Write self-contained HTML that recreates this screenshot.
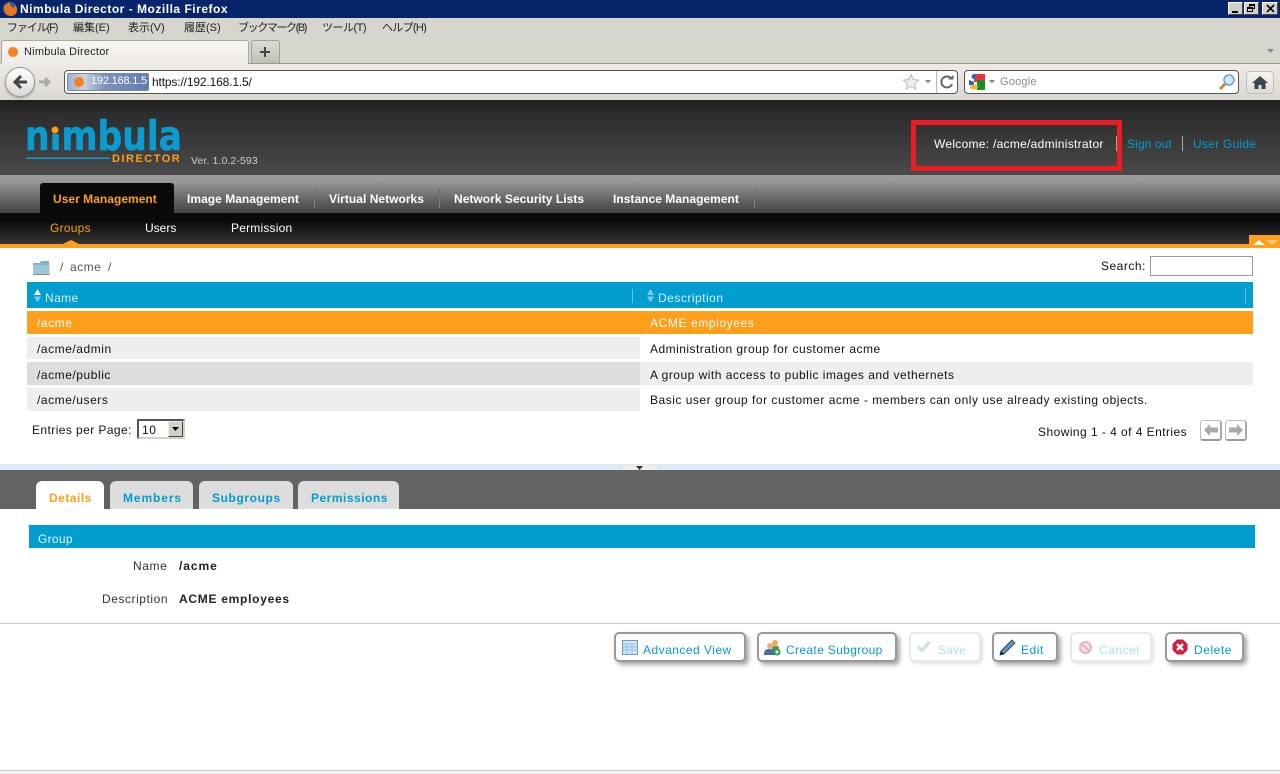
<!DOCTYPE html>
<html><head><meta charset="utf-8"><title>Nimbula Director</title>
<style>
html,body{margin:0;padding:0;width:1280px;height:774px;overflow:hidden;background:#fff}
body{position:relative;font:12px "Liberation Sans","Noto Sans CJK JP",sans-serif;color:#111}
.a,.t{position:absolute}
.t{white-space:nowrap;letter-spacing:.5px;line-height:14px}
.m{top:21px;font-size:11px;color:#222}
.btn{position:absolute;top:632px;height:26px;background:#fff;border:2px solid #999;border-radius:5px;box-shadow:3px 3px 4px #aaa;box-sizing:content-box}
.btn.off{border-color:#e8e8e8;box-shadow:2px 2px 3px #e4e4e4}
.nav{font-weight:bold;color:#fff;letter-spacing:.03px;top:192px}
.sep{position:absolute;top:189px;width:1px;height:19px;background:linear-gradient(#666,#888)}
.tab{position:absolute;top:481px;height:28px;background:#ddd;border-radius:6px 6px 0 0}
.tabt{font-weight:bold;color:#009dcf;top:491px}
.link{color:#009dcf}
</style></head><body>

<!-- window chrome -->
<div class="a" style="left:0;top:0;width:1280px;height:18px;background:#08246b"></div>
<svg class="a" style="left:2px;top:1px" width="16" height="16" viewBox="0 0 16 16"><circle cx="8" cy="8" r="7" fill="#3a5a9a"/><path d="M2 5C1 10 4 15 9 15c4 0 6-3 6-6 0-2-1-4-2-5 0 2-1 3-3 2C8 5 9 3 7 1 6 3 3 3 2 5z" fill="#e8761a"/></svg>
<div class="t" style="left:20px;top:2px;color:#fff;font-weight:bold;font-size:12px;letter-spacing:.51px">Nimbula Director - Mozilla Firefox</div>
<div class="a" style="left:1228px;top:2px;width:15px;height:13px;background:#d4d0c8;border:1px solid;border-color:#fff #444 #444 #fff;box-sizing:border-box"><div class="a" style="left:3px;top:8px;width:6px;height:2px;background:#000"></div></div>
<div class="a" style="left:1244px;top:2px;width:15px;height:13px;background:#d4d0c8;border:1px solid;border-color:#fff #444 #444 #fff;box-sizing:border-box"><div class="a" style="left:4px;top:1px;width:6px;height:5px;border:1px solid #000;border-top-width:2px;box-sizing:border-box"></div><div class="a" style="left:2px;top:4px;width:6px;height:5px;border:1px solid #000;border-top-width:2px;box-sizing:border-box;background:#d4d0c8"></div></div>
<div class="a" style="left:1262px;top:2px;width:16px;height:13px;background:#d4d0c8;border:1px solid;border-color:#fff #444 #444 #fff;box-sizing:border-box"><svg class="a" style="left:3px;top:1px" width="9" height="9"><path d="M1 1l7 7M8 1L1 8" stroke="#000" stroke-width="1.6"/></svg></div>

<div class="a" style="left:0;top:18px;width:1280px;height:46px;background:#d6d5ce"></div>
<div class="t m" style="left:7px;letter-spacing:-1.1px">ファイル(F)</div>
<div class="t m" style="left:73px;letter-spacing:0">編集(E)</div>
<div class="t m" style="left:128px;letter-spacing:0">表示(V)</div>
<div class="t m" style="left:184px;letter-spacing:0">履歴(S)</div>
<div class="t m" style="left:238px;letter-spacing:-1.4px">ブックマーク(B)</div>
<div class="t m" style="left:322px;letter-spacing:-.5px">ツール(T)</div>
<div class="t m" style="left:382px;letter-spacing:-.7px">ヘルプ(H)</div>

<div class="a" style="left:1px;top:40px;width:248px;height:25px;background:linear-gradient(#f7f5f2,#eeebe7);border:1px solid #a8a89c;border-bottom:0;border-radius:3px 3px 0 0;box-sizing:border-box"></div>
<div class="a" style="left:8px;top:47px;width:10px;height:10px;border-radius:50%;background:#f58220"></div>
<div class="t" style="left:24px;top:45px;font-size:11px;letter-spacing:.22px;color:#222">Nimbula Director</div>
<div class="a" style="left:251px;top:40px;width:29px;height:24px;background:linear-gradient(#dcdbd4,#bfbeb6);border:1px solid #a0a094;border-bottom:0;border-radius:3px 3px 0 0;box-sizing:border-box"></div>
<svg class="a" style="left:259px;top:46px" width="12" height="12"><path d="M6 1v10M1 6h10" stroke="#444" stroke-width="2"/></svg>
<svg class="a" style="left:1267px;top:49px" width="8" height="5"><path d="M0 0h7L3.500 4z" fill="#888"/></svg>

<div class="a" style="left:0;top:63px;width:1280px;height:1px;background:#9a9a88"></div>
<div class="a" style="left:1px;top:63px;width:247px;height:1px;background:#eeebe7"></div>
<div class="a" style="left:0;top:64px;width:1280px;height:36px;background:linear-gradient(#eeebe7,#dbd8d1)"></div>

<!-- back/forward -->
<svg class="a" style="left:36px;top:72px" width="20" height="20"><path d="M3 10h10M9 6l4 4-4 4" fill="none" stroke="#a9a9a9" stroke-width="3"/></svg>
<div class="a" style="left:5px;top:67px;width:30px;height:30px;background:linear-gradient(#fff,#dcdad6);border:1px solid #9b9b96;border-radius:50%;box-sizing:border-box;box-shadow:0 1px 2px #999"></div>
<svg class="a" style="left:10px;top:72px" width="20" height="20"><path d="M17 10H5M11 4l-6 6 6 6" fill="none" stroke="#444" stroke-width="3"/></svg>

<!-- URL bar -->
<div class="a" style="left:64px;top:70px;width:894px;height:24px;background:#fff;border:1px solid #555;border-radius:4px;box-sizing:border-box"></div>
<div class="a" style="left:67px;top:73px;width:82px;height:18px;background:linear-gradient(90deg,#9eb0d4,#c8d2e6 20%,#7e93bd 45%,#5f7cae);border:1px solid #7788aa;border-radius:2px;box-sizing:border-box"></div>
<div class="a" style="left:74px;top:77px;width:10px;height:10px;border-radius:50%;background:#f58220"></div>
<div class="t" style="left:91px;top:74px;font-size:11px;letter-spacing:-.2px;color:#fff">192.168.1.5</div>
<div class="t" style="left:152px;top:75px;font-size:12px;letter-spacing:-.15px;color:#111">https://192.168.1.5/</div>
<svg class="a" style="left:902px;top:73px" width="18" height="18"><path d="M9 1.500l2.300 5 5.400.6-4 3.700 1.100 5.400L9 13.500l-4.800 2.700 1.100-5.400-4-3.700 5.400-.6z" fill="#eee" stroke="#bbb"/></svg>
<svg class="a" style="left:925px;top:80px" width="7" height="4"><path d="M0 0h6L3 3.500z" fill="#888"/></svg>
<div class="a" style="left:936px;top:71px;width:1px;height:22px;background:#bbb"></div>
<svg class="a" style="left:939px;top:74px" width="16" height="16"><path d="M12.500 5A5.500 5.500 0 1 0 13 10" fill="none" stroke="#666" stroke-width="2"/><path d="M9 5.500h5.500V1z" fill="#666"/></svg>

<!-- search -->
<div class="a" style="left:964px;top:70px;width:275px;height:24px;background:#fff;border:1px solid #555;border-radius:4px;box-sizing:border-box"></div>
<svg class="a" style="left:969px;top:73px" width="17" height="18"><rect x="5" y="1" width="11" height="8" fill="#e33"/><rect x="8" y="7" width="8" height="10" fill="#1a8a2a"/><ellipse cx="5" cy="3.500" rx="2.500" ry="2.500" fill="#36c"/><path d="M0 7l5 2v3H0z" fill="#26b"/><ellipse cx="5" cy="14" rx="4" ry="2.500" fill="#eb2"/></svg>
<svg class="a" style="left:989px;top:80px" width="7" height="4"><path d="M0 0h6L3 3.500z" fill="#888"/></svg>
<div class="t" style="left:1000px;top:75px;font-size:11px;letter-spacing:.2px;color:#888">Google</div>
<svg class="a" style="left:1218px;top:73px" width="18" height="18"><path d="M2 16l5-5" stroke="#c98a3c" stroke-width="3"/><circle cx="11" cy="7" r="5" fill="#cfe6fb" stroke="#6aa2d8" stroke-width="1.500"/></svg>
<div class="a" style="left:1246px;top:71px;width:28px;height:23px;background:linear-gradient(#f6f4f1,#dedbd5);border:1px solid #c2c0ba;border-radius:4px;box-sizing:border-box"></div>
<svg class="a" style="left:1252px;top:75px" width="16" height="15"><path d="M8 1L0 8h2.500v6h4v-4h3v4h4V8H16z" fill="#3a4650"/></svg>

<!-- app header -->
<div class="a" style="left:0;top:100px;width:1280px;height:75px;background:linear-gradient(#1f1f1f 0,#2b2b2b 15%,#4a4a4a 100%)"></div>
<svg class="a" style="left:20px;top:112px" width="175" height="56">
<text x="5" y="38" font-family="'DejaVu Sans',sans-serif" font-weight="bold" font-size="41" fill="#0a9bd0" stroke="#0a9bd0" stroke-width=".6" textLength="157" lengthAdjust="spacingAndGlyphs">nimbula</text>
<rect x="31" y="4" width="9" height="18" fill="#323232"/>
<circle cx="35" cy="18" r="3.500" fill="#ff9f1c"/>
<rect x="6" y="45.500" width="84" height="1.500" fill="#0a9bd0"/>
<text x="92" y="50" font-family="'Liberation Sans',sans-serif" font-weight="bold" font-size="11" letter-spacing="1.500" fill="#ff9f1c">DIRECTOR</text>
</svg>
<div class="t" style="left:191px;top:154px;font-size:10.500px;color:#ccc;letter-spacing:.1px">Ver. 1.0.2-593</div>

<div class="a" style="left:911px;top:120px;width:211px;height:51px;border:5px solid #ed1c24;box-sizing:border-box"></div>
<div class="t" style="left:934px;top:137px;color:#fff;letter-spacing:.28px">Welcome: /acme/administrator</div>
<div class="a" style="left:1116px;top:136px;width:1px;height:15px;background:#aaa"></div>
<div class="t link" style="left:1127px;top:137px;letter-spacing:.1px">Sign out</div>
<div class="a" style="left:1182px;top:136px;width:1px;height:15px;background:#aaa"></div>
<div class="t link" style="left:1193px;top:137px;letter-spacing:.25px">User Guide</div>

<!-- nav -->
<div class="a" style="left:0;top:175px;width:1280px;height:38px;background:linear-gradient(#9c9c9c 0,#999 15%,#5a5a5a 75%,#454545 100%)"></div>
<div class="a" style="left:40px;top:183px;width:134px;height:30px;background:#0a0a0a;border-radius:3px 3px 0 0"></div>
<div class="t nav" style="left:53px;color:#ff9f1c">User Management</div>
<div class="t nav" style="left:187px">Image Management</div>
<div class="sep" style="left:314px"></div>
<div class="t nav" style="left:329px">Virtual Networks</div>
<div class="sep" style="left:439px"></div>
<div class="t nav" style="left:454px">Network Security Lists</div>
<div class="t nav" style="left:613px">Instance Management</div>
<div class="sep" style="left:754px"></div>

<div class="a" style="left:0;top:213px;width:1280px;height:31px;background:linear-gradient(#0a0a0a 0,#0a0a0a 25%,#353535 100%)"></div>
<div class="t" style="left:50px;top:221px;color:#ff9f1c;letter-spacing:.25px">Groups</div>
<div class="t" style="left:145px;top:221px;color:#fff;letter-spacing:0">Users</div>
<div class="t" style="left:231px;top:221px;color:#fff;letter-spacing:.2px">Permission</div>
<div class="a" style="left:0;top:244px;width:1280px;height:4px;background:#ff9f1c"></div>
<div class="a" style="left:63px;top:240px;width:0;height:0;border:8px solid transparent;border-top:0;border-bottom:4px solid #ff9f1c"></div>
<div class="a" style="left:1249px;top:235px;width:31px;height:10px;background:#ff9f1c"></div>
<div class="a" style="left:1253px;top:240px;width:0;height:0;border:6px solid transparent;border-top:0;border-bottom:5px solid #fff"></div>
<div class="a" style="left:1266px;top:240px;width:0;height:0;border:6px solid transparent;border-bottom:0;border-top:5px solid #ffc880"></div>

<!-- breadcrumb -->
<svg class="a" style="left:33px;top:261px" width="17" height="14"><path d="M0 2h7l1-2h8v13H0z" fill="#7fb0c8"/><rect x="0" y="4" width="16.500" height="9" fill="#9cc6da"/><path d="M0 13h16.500v1H0z" fill="#888"/></svg>
<div class="t" style="left:60px;top:260px;color:#555">/</div>
<div class="t" style="left:70px;top:260px;color:#555">acme</div>
<div class="t" style="left:108px;top:260px;color:#555">/</div>
<div class="t" style="left:1101px;top:259px;color:#111">Search:</div>
<div class="a" style="left:1150px;top:256px;width:103px;height:20px;background:#fff;border:1px solid #999;box-sizing:border-box"></div>

<!-- table -->
<div class="a" style="left:27px;top:282px;width:1226px;height:26px;background:#009dcf"></div>
<svg class="a" style="left:34px;top:289px" width="8" height="14"><path d="M3.500 0L7 6H0z" fill="#fff"/><path d="M0 7.500h7L3.500 13.500z" fill="#7cc8ea"/></svg>
<div class="t" style="left:45px;top:291px;color:#d8f0fa;letter-spacing:.4px">Name</div>
<div class="a" style="left:632px;top:289px;width:1px;height:14px;background:#6cc4e4"></div>
<svg class="a" style="left:647px;top:289px" width="8" height="14"><path d="M3.500 0L7 6H0z" fill="#7cc8ea"/><path d="M0 7.500h7L3.500 13.500z" fill="#7cc8ea"/></svg>
<div class="t" style="left:658px;top:291px;color:#d8f0fa;letter-spacing:.5px">Description</div>
<div class="a" style="left:1245px;top:289px;width:1px;height:14px;background:#6cc4e4"></div>

<div class="a" style="left:27px;top:311px;width:1226px;height:23px;background:#ff9f1c"></div>
<div class="t" style="left:37px;top:316px;color:#fff;letter-spacing:.6px">/acme</div>
<div class="t" style="left:650px;top:316px;color:#fff;letter-spacing:.6px">ACME employees</div>

<div class="a" style="left:27px;top:337px;width:613px;height:22px;background:#eee"></div>
<div class="t" style="left:37px;top:342px;letter-spacing:.55px">/acme/admin</div>
<div class="t" style="left:650px;top:342px;letter-spacing:.47px">Administration group for customer acme</div>

<div class="a" style="left:27px;top:362px;width:613px;height:23px;background:#ddd"></div>
<div class="a" style="left:640px;top:362px;width:613px;height:23px;background:#eee"></div>
<div class="t" style="left:37px;top:368px;letter-spacing:.55px">/acme/public</div>
<div class="t" style="left:650px;top:368px;letter-spacing:.49px">A group with access to public images and vethernets</div>

<div class="a" style="left:27px;top:388px;width:613px;height:23px;background:#eee"></div>
<div class="t" style="left:37px;top:393px;letter-spacing:.55px">/acme/users</div>
<div class="t" style="left:650px;top:393px;letter-spacing:.51px">Basic user group for customer acme - members can only use already existing objects.</div>

<div class="t" style="left:32px;top:423px;letter-spacing:.42px">Entries per Page:</div>
<div class="a" style="left:137px;top:419px;width:48px;height:20px;background:#fff;border:2px solid;border-color:#555 #d4d0c8 #d4d0c8 #555;box-sizing:border-box"></div>
<div class="t" style="left:142px;top:423px;letter-spacing:.6px">10</div>
<div class="a" style="left:168px;top:421px;width:15px;height:16px;background:#d4d0c8;border:1px solid;border-color:#eee #444 #444 #eee;box-sizing:border-box"></div>
<svg class="a" style="left:172px;top:427px" width="8" height="5"><path d="M0 0h7L3.500 4z" fill="#000"/></svg>

<div class="t" style="left:1038px;top:425px;letter-spacing:.45px">Showing 1 - 4 of 4 Entries</div>
<div class="a" style="left:1200px;top:420px;width:22px;height:21px;background:#fff;border:1px solid #bbb;border-bottom:2px solid #999;border-right:2px solid #aaa;border-radius:3px;box-sizing:border-box"></div>
<svg class="a" style="left:1203px;top:423px" width="16" height="14"><path d="M1 7l6-6v3.500h8v5H7V13z" fill="#aaa"/></svg>
<div class="a" style="left:1225px;top:420px;width:22px;height:21px;background:#fff;border:1px solid #bbb;border-bottom:2px solid #999;border-right:2px solid #aaa;border-radius:3px;box-sizing:border-box"></div>
<svg class="a" style="left:1228px;top:423px" width="16" height="14"><path d="M15 7L9 1v3.500H1v5h8V13z" fill="#aaa"/></svg>

<!-- splitter -->
<div class="a" style="left:0;top:464px;width:1280px;height:6px;background:#dcebf7;border-top:1px solid #e6e6e6;box-sizing:border-box"></div>
<div class="a" style="left:623px;top:465px;width:34px;height:5px;background:#eee"></div>
<svg class="a" style="left:636px;top:465px" width="8" height="5"><path d="M0 1h7L3.500 5z" fill="#333"/></svg>

<!-- detail tabs -->
<div class="a" style="left:0;top:470px;width:1280px;height:39px;background:#636363"></div>
<div class="tab" style="left:36px;width:68px;background:#fff"></div>
<div class="t tabt" style="left:49px;color:#ff9f1c;letter-spacing:.5px">Details</div>
<div class="tab" style="left:110px;width:83px"></div>
<div class="t tabt" style="left:123px;letter-spacing:.9px">Members</div>
<div class="tab" style="left:199px;width:94px"></div>
<div class="t tabt" style="left:212px;letter-spacing:.6px">Subgroups</div>
<div class="tab" style="left:298px;width:101px"></div>
<div class="t tabt" style="left:311px;letter-spacing:.5px">Permissions</div>

<div class="a" style="left:29px;top:525px;width:1226px;height:23px;background:#009dcf"></div>
<div class="t" style="left:38px;top:532px;color:#e4f5fb;letter-spacing:.3px">Group</div>
<div class="t" style="left:133px;top:559px;color:#333;letter-spacing:.6px">Name</div>
<div class="t" style="left:179px;top:559px;color:#222;font-weight:bold;letter-spacing:.95px">/acme</div>
<div class="t" style="left:102px;top:592px;color:#333;letter-spacing:.55px">Description</div>
<div class="t" style="left:179px;top:592px;color:#222;font-weight:bold;letter-spacing:.72px">ACME employees</div>
<div class="a" style="left:0;top:623px;width:1280px;height:1px;background:#ccc"></div>

<!-- buttons -->
<div class="btn" style="left:614px;width:128px"></div>
<svg class="a" style="left:622px;top:640px" width="16" height="15"><rect x=".5" y=".5" width="15" height="14" fill="#cfe6f7" stroke="#6d9cbc"/><path d="M1 4h14M1 7h14M1 10h14M5 4v10M10 4v10" stroke="#8fc0e4"/></svg>
<div class="t link" style="left:643px;top:643px;letter-spacing:.47px">Advanced View</div>

<div class="btn" style="left:757px;width:136px"></div>
<svg class="a" style="left:764px;top:639px" width="17" height="17"><circle cx="11" cy="4" r="3" fill="#e8a860"/><rect x="8" y="7" width="7" height="8" rx="2" fill="#5a9a4a"/><circle cx="6" cy="7" r="3" fill="#e8b080"/><path d="M0 16c0-5 2-6 5-6s6 1 6 6z" fill="#4a6ea8"/><circle cx="13" cy="13" r="3.500" fill="#2e9a4a"/><path d="M13 11v4M11 13h4" stroke="#fff"/></svg>
<div class="t link" style="left:786px;top:643px;letter-spacing:.35px">Create Subgroup</div>

<div class="btn off" style="left:909px;width:68px"></div>
<svg class="a" style="left:916px;top:640px" width="16" height="14"><path d="M1 8l5 5 9-10-3-2-6 7-3-2z" fill="#cfe3e6"/></svg>
<div class="t" style="left:938px;top:643px;color:#aee0f2;letter-spacing:.15px">Save</div>

<div class="btn" style="left:992px;width:62px"></div>
<svg class="a" style="left:999px;top:639px" width="17" height="17"><path d="M13 1l3 3L5 15l-4 1 1-4z" fill="#5a94c4" stroke="#333" stroke-width=".8"/><path d="M1 16l1-4 3 3z" fill="#222"/></svg>
<div class="t link" style="left:1021px;top:643px;letter-spacing:.55px">Edit</div>

<div class="btn off" style="left:1070px;width:78px"></div>
<svg class="a" style="left:1078px;top:640px" width="15" height="15"><circle cx="7.500" cy="7.500" r="5.500" fill="#f6e4e6" stroke="#eab4bc" stroke-width="2"/><path d="M4 4l7 7" stroke="#eab4bc" stroke-width="2"/></svg>
<div class="t" style="left:1099px;top:643px;color:#aee0f2;letter-spacing:.55px">Cancel</div>

<div class="btn" style="left:1165px;width:75px"></div>
<svg class="a" style="left:1172px;top:639px" width="16" height="16"><path d="M5 .5h6L15.500 5v6L11 15.500H5L.5 11V5z" fill="#d41c3c"/><path d="M5 5l6 6M11 5l-6 6" stroke="#fff" stroke-width="2.400"/></svg>
<div class="t link" style="left:1194px;top:643px;letter-spacing:.55px">Delete</div>

<div class="a" style="left:0;top:770px;width:1280px;height:1px;background:#ccc"></div>
<div class="a" style="left:0;top:771px;width:1280px;height:3px;background:#f2f2f2"></div>
</body></html>
